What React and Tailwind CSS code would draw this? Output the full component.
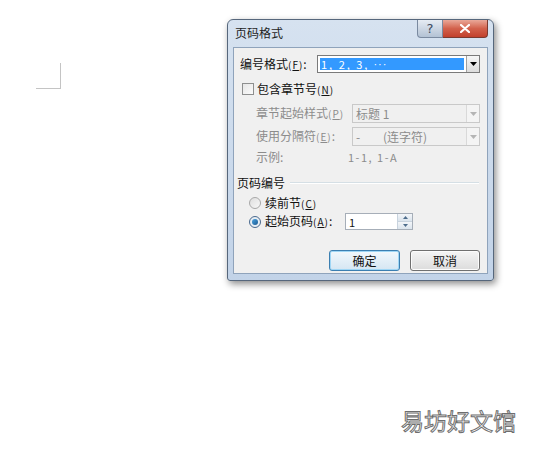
import React from "react";

const cjk = { fontFamily: '"Noto Sans CJK SC", "Noto Sans", sans-serif' };

// Small combo box arrow
const ComboArrow = ({ disabled }) => (
    <div
        className={`w-[13px] h-full flex items-center justify-center border-l ${
            disabled ? "border-[#d9d9d9] bg-[#f4f4f4]" : "border-[#a0a0a0] bg-gradient-to-b from-[#f6f6f6] to-[#dcdcdc]"
        }`}
    >
        <svg width="7" height="4" viewBox="0 0 7 4">
            <path d="M0 0 H7 L3.5 4 Z" fill={disabled ? "#b5b5b5" : "#000"} />
        </svg>
    </div>
);

const Hot = ({ k }) => (
    <span className="text-[10px] tracking-[1px]">
        (<span className="underline">{k}</span>)
    </span>
);

const App = () => {
    return (
        <div className="relative w-[546px] h-[454px] bg-white overflow-hidden" style={cjk}>
            <div className="flex items-start">
                {/* page corner mark */}
                <div className="ml-[36px] mt-[63px] w-[25px] h-[26px] border-r border-b border-[#c4c4c4]" />

                {/* Dialog */}
                <div className="ml-[166px] mt-[19px] w-[267px] h-[262px] rounded-t-[6px] rounded-b-[3px] border border-[#56677c] bg-gradient-to-b from-[#d6e2f0] to-[#c2d3e8] shadow-[2px_3px_7px_rgba(0,0,0,0.45)] flex flex-col">
                    {/* Title bar */}
                    <div className="h-[27px] flex items-start pl-[7px] pr-[5px]">
                        <div className="mt-[6px] text-[12px] leading-[14px] text-[#1e1e1e] flex-1">页码格式</div>
                        <div className="flex">
                            <div className="w-[26px] h-[18px] rounded-bl-[4px] border border-t-0 border-[#7a8aa0] bg-gradient-to-b from-[#e6ecf3] to-[#b3c2d4] flex items-center justify-center text-[13px] leading-none text-[#3c4b5e]" style={{ fontFamily: '"DejaVu Sans", sans-serif' }}>
                                ?
                            </div>
                            <div className="w-[45px] h-[18px] rounded-br-[4px] border border-t-0 border-l-0 border-[#7a3a30] bg-gradient-to-b from-[#e9a899] via-[#d2614c] to-[#c2402c] flex items-center justify-center">
                                <svg width="10" height="9" viewBox="0 0 10 9">
                                    <path d="M1 1 L9 8 M9 1 L1 8" stroke="#fff" strokeWidth="2.2" strokeLinecap="round" />
                                </svg>
                            </div>
                        </div>
                    </div>

                    {/* Client */}
                    <div className="mx-[5px] h-[227px] border border-[#8fa3bb] bg-[#f0f0f0] flex flex-col pl-[6px] pr-[6px] text-[12px] leading-[14px] text-[#111]">
                        {/* number format */}
                        <div className="mt-[7px] h-[18px] flex items-center">
                            <div className="w-[77px]">
                                编号格式<Hot k="F" />:
                            </div>
                            <div className="w-[163px] h-[18px] border border-[#7a7a7a] bg-white flex">
                                <div className="flex-1 m-[2px] bg-[#3399ff] text-white text-[11px] leading-[12px] pl-[1px] flex items-center">
                                    <span className="tracking-[2px]">1, 2, 3,</span>
                                    <span className="ml-[4px] tracking-[1px]" style={{ fontFamily: '"Liberation Sans", sans-serif' }}>···</span>
                                </div>
                                <ComboArrow />
                            </div>
                        </div>

                        {/* include chapter */}
                        <div className="mt-[9px] h-[14px] flex items-center">
                            <div className="ml-[2px] w-[12px] h-[12px] border border-[#8e8f8f] bg-gradient-to-br from-[#e6e6e6] to-[#fbfbfb]" />
                            <div className="ml-[3px]">
                                包含章节号<Hot k="N" />
                            </div>
                        </div>

                        {/* disabled rows */}
                        <div className="text-[#8c8c8c]">
                            <div className="mt-[8px] h-[19px] flex items-center pl-[16px]">
                                <div className="w-[96px]">
                                    章节起始样式<Hot k="P" />
                                </div>
                                <div className="w-[128px] h-[19px] border border-[#c9c9c9] bg-[#f0f0f0] flex">
                                    <div className="flex-1 pl-[3px] flex items-center">标题 1</div>
                                    <ComboArrow disabled />
                                </div>
                            </div>
                            <div className="mt-[4px] h-[19px] flex items-center pl-[16px]">
                                <div className="w-[96px]">
                                    使用分隔符<Hot k="E" />:
                                </div>
                                <div className="w-[128px] h-[19px] border border-[#c9c9c9] bg-[#f0f0f0] flex">
                                    <div className="flex-1 pl-[3px] flex items-center">
                                        <span className="w-[27px]">-</span>(连字符)
                                    </div>
                                    <ComboArrow disabled />
                                </div>
                            </div>
                            <div className="mt-[4px] h-[14px] flex items-center pl-[16px]">
                                <div className="w-[92px]">示例:</div>
                                <div className="text-[11px] tracking-[1.5px]">1-1, 1-A</div>
                            </div>
                        </div>

                        {/* page numbering group */}
                        <div className="mt-[12px] h-[14px] flex items-center -ml-[3px]">
                            <div>页码编号</div>
                            <div className="ml-[5px] flex-1 mr-[2px] h-[2px] border-t border-[#d5dfe5] border-b-white border-b" />
                        </div>

                        <div className="mt-[6px] h-[14px] flex items-center ml-[9px]">
                            <div className="w-[12px] h-[12px] rounded-full border border-[#a8a8a8] bg-gradient-to-br from-[#dedede] to-[#f8f8f8]" />
                            <div className="ml-[4px]">
                                续前节<Hot k="C" />
                            </div>
                        </div>

                        <div className="mt-[3px] h-[17px] flex items-center ml-[9px]">
                            <div className="w-[12px] h-[12px] rounded-full border border-[#4a6a8e] bg-[#e8eef4] flex items-center justify-center">
                                <div className="w-[6px] h-[6px] rounded-full bg-gradient-to-br from-[#4aa3e0] to-[#1c5a92]" />
                            </div>
                            <div className="ml-[4px] w-[80px]">
                                起始页码<Hot k="A" />:
                            </div>
                            <div className="w-[68px] h-[17px] border border-[#a6aeb8] bg-white flex">
                                <div className="flex-1 pl-[3px] flex items-center text-[11px]">1</div>
                                <div className="w-[15px] flex flex-col border-l border-[#c8d3de]">
                                    <div className="flex-1 flex items-center justify-center bg-gradient-to-b from-[#f3f6f9] to-[#dbe4ed] border-b border-[#c8d3de]">
                                        <svg width="5" height="3" viewBox="0 0 5 3"><path d="M0 3 L2.5 0 L5 3 Z" fill="#4e6d8c" /></svg>
                                    </div>
                                    <div className="flex-1 flex items-center justify-center bg-gradient-to-b from-[#f3f6f9] to-[#dbe4ed]">
                                        <svg width="5" height="3" viewBox="0 0 5 3"><path d="M0 0 L5 0 L2.5 3 Z" fill="#4e6d8c" /></svg>
                                    </div>
                                </div>
                            </div>
                        </div>

                        {/* buttons */}
                        <div className="mt-[20px] flex justify-end gap-[10px] pr-[1px]">
                            <button className="w-[71px] h-[21px] rounded-[3px] border border-[#3c7fb1] bg-gradient-to-b from-[#f2f8fc] to-[#d5e6f3] shadow-[inset_0_0_0_1px_#9fd6f5] text-[12px] leading-none text-[#111]">
                                确定
                            </button>
                            <button className="w-[70px] h-[21px] rounded-[3px] border border-[#707070] bg-gradient-to-b from-[#f5f5f5] to-[#dcdcdc] shadow-[inset_0_0_0_1px_#fcfcfc] text-[12px] leading-none text-[#111]">
                                取消
                            </button>
                        </div>
                    </div>
                </div>
            </div>

            {/* watermark */}
            <div className="absolute left-[401px] top-[406px] text-[23px] leading-[28px] text-white [-webkit-text-stroke:1px_#6e6e6e]">
                易坊好文馆
            </div>
        </div>
    );
};

export default App;
